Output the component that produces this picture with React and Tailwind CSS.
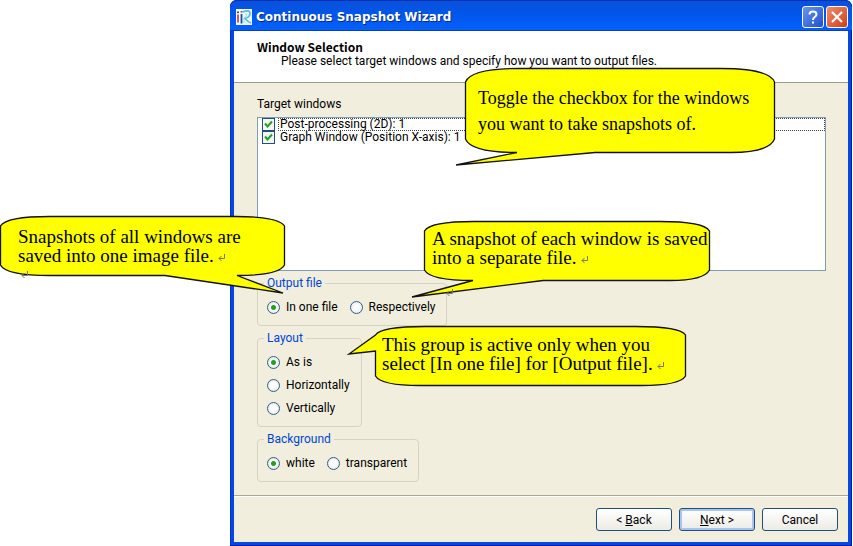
import { useState } from "react";

const WINDOWS = ["Post-processing (2D): 1", "Graph Window (Position X-axis): 1"];

function Logo() {
  return (
    <svg className="size-4 shrink-0" viewBox="0 0 16 16" aria-hidden="true">
      <rect width="16" height="16" fill="#eef9fd" />
      <path d="M2 5.500v8" stroke="#d9434e" strokeWidth="1.800" />
      <path d="M5.500 5v9.500" stroke="#1d4f9c" strokeWidth="1.800" />
      <rect x="1" y="2.500" width="2" height="1.600" fill="#1d4f9c" />
      <rect x="4.600" y="2" width="2" height="1.600" fill="#d9434e" />
      <path d="M6.500 3Q14 0 14 4.500Q14 8 9 9.500Q12 13 15 14" fill="none" stroke="#57bfdc" strokeWidth="1.700" />
      <path d="M9 5Q11.500 4.500 10.500 6.500L8 9V14" fill="none" stroke="#9bd8ea" strokeWidth="1" />
    </svg>
  );
}

function Radio({ name, label, checked, onChange }) {
  return (
    <label className="flex h-3.5 items-center gap-1.5">
      <input
        type="radio"
        name={name}
        checked={checked}
        onChange={onChange}
        className="size-[13px] shrink-0 appearance-none rounded-full border border-[#2f618f] bg-[radial-gradient(circle,#ffffff_30%,#dcdcd6_100%)] checked:bg-[radial-gradient(circle,#21a121_2px,#fbfbf9_3px,#e6e6e0_6px)]"
      />
      {label}
    </label>
  );
}

function RadioGroup({ legend, name, options, vertical }) {
  const [value, setValue] = useState(options[0]);
  return (
    <fieldset className="w-fit rounded-[4px] border border-[#d5d4c2] pt-2.5 pr-2 pb-[11px] pl-1.5">
      <legend className="px-[3px] leading-3.5 text-[#0046d5]">{legend}</legend>
      <div className={vertical ? "flex flex-col gap-[9px] px-[3px]" : "flex gap-3 px-[3px]"}>
        {options.map((o) => (
          <Radio key={o} name={name} label={o} checked={value === o} onChange={() => setValue(o)} />
        ))}
      </div>
    </fieldset>
  );
}

function Return({ className = "" }) {
  return (
    <svg className={"inline-block h-2 w-2 " + className} viewBox="0 0 8 8" fill="none" stroke="#777" aria-hidden="true">
      <path d="M6.500 0v4.500H1M3.500 2L1 4.500L3.500 7" />
    </svg>
  );
}

function Callout({ className, path, children }) {
  return (
    <div className={"absolute font-['Liberation_Serif',serif] text-black " + className}>
      <svg className="absolute inset-0 size-full overflow-visible" aria-hidden="true">
        <path d={path} fill="#ffff00" stroke="#111" strokeWidth="1.300" strokeLinejoin="miter" />
      </svg>
      <div className="relative whitespace-nowrap">{children}</div>
    </div>
  );
}

const buttonBase = "h-[23px] w-[76px] rounded-[3px] border border-[#1f4f80] bg-linear-to-b from-white to-[#ecebe5] text-center";

export default function App() {
  return (
    <div className="relative flex min-h-screen bg-white pr-px pl-[230px] font-[Roboto,sans-serif] text-[12px] text-black">
      <main className="flex flex-1 flex-col rounded-t-[7px] bg-[#0348e0] px-1 pb-1 shadow-[inset_-1px_-1px_0_#0019a8,inset_1px_0_0_#0831d9]">
        <header className="-mx-1 flex h-[31px] items-center gap-[3px] rounded-t-[7px] bg-linear-to-b from-[#0a50d8] via-[#0157ec] to-[#0560fb] pt-0.5 pr-1 pl-1.5 shadow-[inset_0_1px_0_#0831b9,inset_0_-1px_0_#0340c4]">
          <Logo />
          <h1 className="flex-1 pl-px font-['DejaVu_Sans',sans-serif] text-[12px] font-bold text-white [text-shadow:1px_1px_0_#0a2a80]">Continuous Snapshot Wizard</h1>
          <div className="flex gap-0.5">
            <button aria-label="Help" className="flex size-[22px] items-center justify-center rounded-[3px] border border-white bg-linear-to-br from-[#6a93f0] to-[#1f4fd0]">
              <svg className="size-4" viewBox="0 0 16 16" fill="none" stroke="#fff" strokeWidth="2" aria-hidden="true">
                <path d="M4.500 5.500Q4.500 2.500 8 2.500T11.500 5.500C11.500 8 8 7.500 8 11M8 12.500v2" />
              </svg>
            </button>
            <button aria-label="Close" className="flex size-[22px] items-center justify-center rounded-[3px] border border-white bg-linear-to-br from-[#ee8a6c] to-[#d23a10]">
              <svg className="size-4" viewBox="0 0 16 16" stroke="#fff" strokeWidth="2.200" aria-hidden="true">
                <path d="M3 3l10 10M13 3L3 13" />
              </svg>
            </button>
          </div>
        </header>

        <section className="h-[52px] border-b border-[#9d9c92] bg-white px-[23px] pt-[9px] leading-[14px]">
          <h2 className="font-['Noto_Sans_CJK_JP',sans-serif] leading-[14px] font-bold">Window Selection</h2>
          <p className="pl-6">Please select target windows and specify how you want to output files.</p>
        </section>

        <section className="flex flex-1 flex-col bg-[#f1eedd] pt-3.5 pr-[22px] pl-[23px] leading-3.5">
          <h3 id="targets">Target windows</h3>
          <ul aria-labelledby="targets" className="mt-1.5 h-[154px] border border-[#7f9db9] bg-white pl-1 leading-[13px]">
            {WINDOWS.map((w, i) => (
              <li key={w}>
                <label className="flex h-[13px] items-center gap-[3px]">
                  <span className="relative size-[13px] shrink-0">
                    <input type="checkbox" defaultChecked className="peer block size-[13px] appearance-none border border-[#1c5180] bg-[#f6f6f3]" />
                    <svg className="pointer-events-none absolute inset-0 hidden size-[13px] peer-checked:block" viewBox="0 0 13 13" fill="none" stroke="#21a121" strokeWidth="2" aria-hidden="true">
                      <path d="M3 5.500L5.500 8.500L10 3.500" />
                    </svg>
                  </span>
                  <span className={i === 0 ? "flex-1 pl-0.5 outline-1 -outline-offset-1 outline-dotted outline-[#444]" : "flex-1 pl-0.5"}>{w}</span>
                </label>
              </li>
            ))}
          </ul>
          <div className="mt-[5px] flex flex-col gap-[5px]">
            <RadioGroup legend="Output file" name="output" options={["In one file", "Respectively"]} />
            <RadioGroup legend="Layout" name="layout" options={["As is", "Horizontally", "Vertically"]} vertical />
            <RadioGroup legend="Background" name="background" options={["white", "transparent"]} />
          </div>
        </section>

        <footer className="flex justify-end gap-[7px] border-t border-[#aca899] bg-[#f1eedd] pt-3 pr-2.5 pb-[11px] shadow-[inset_0_1px_0_#fff]">
          <button className={buttonBase}>&lt; <u>B</u>ack</button>
          <button className={buttonBase + " shadow-[inset_0_0_0_2px_#a9c3f2]"}><u>N</u>ext &gt;</button>
          <button className={buttonBase}>Cancel</button>
        </footer>
      </main>

      <Callout
        className="top-[68px] left-[465px] h-[85px] w-[310px] pt-[17px] pl-[13px] text-[18px] leading-[26px]"
        path="M.5 14Q6 .5 54 .5H256Q304 .5 309.500 14V71Q304 84.500 266 84.500H130L-9 97L52 84.500Q6 84.500 .5 71Z"
      >
        Toggle the checkbox for the windows<br />you want to take snapshots of.
      </Callout>
      <Callout
        className="top-[216px] left-0 h-[60px] w-[285px] pt-[11px] pl-[18px] text-[19px] leading-[19px]"
        path="M.5 10Q6 .5 50 .5H235Q279 .5 284.500 10V49Q279 59.500 237 59.500L283 77L165 59.500H50Q6 59.500 .5 49Z"
      >
        Snapshots of all windows are<br />saved into one image file.<Return className="ml-1" />
        <Return className="absolute top-[44px] left-[3px]" />
      </Callout>
      <Callout
        className="top-[221px] left-[424px] h-[60px] w-[286px] pt-2 pl-2 text-[19px] leading-[19px]"
        path="M.5 10Q6 .5 50 .5H236Q280 .5 285.500 10V49Q280 59.500 246 59.500H119L-12 76L49 59.500Q6 59.500 .5 49Z"
      >
        A snapshot of each window is saved<br />into a separate file.<Return className="ml-1" />
        <Return className="absolute top-[60px] left-3.5" />
      </Callout>
      <Callout
        className="top-[326px] left-[375px] h-[60px] w-[311px] pt-[9px] pl-[7px] text-[19px] leading-[19px]"
        path="M.5 9Q6 .5 50 .5H261Q305 .5 310.500 9V50Q305 59.500 266 59.500H45Q6 59.500 .5 50V25L-26 28Z"
      >
        This group is active only when you<br />select [In one file] for [Output file].<Return className="ml-1" />
      </Callout>
    </div>
  );
}
